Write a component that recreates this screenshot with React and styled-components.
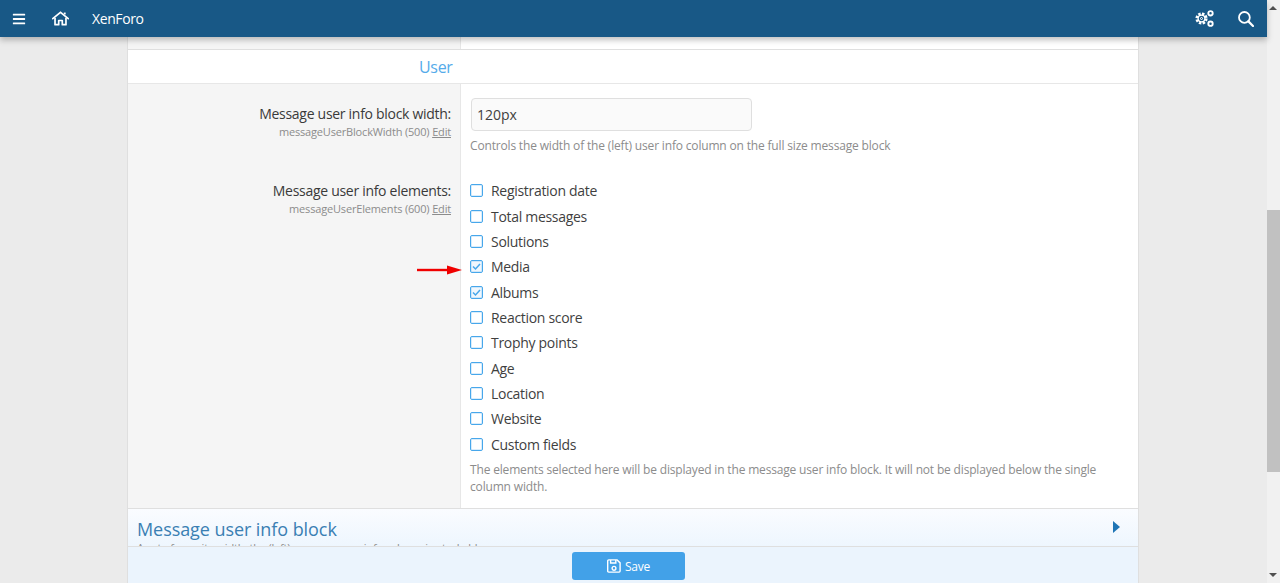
import styled, { createGlobalStyle } from "styled-components";
import { FaBars } from "react-icons/fa";

const GlobalStyle = createGlobalStyle`
  html, body {
    margin: 0;
    height: 100%;
    overflow: hidden;
  }
  body {
    font-family: "Open Sans", "Noto Sans", sans-serif;
    font-size: 14px;
    color: #3f3f3f;
    background: #ebebeb;
  }
`;

const Page = styled.div`
  display: flex;
  width: 1280px;
  height: 583px;
`;
const Main = styled.div`
  display: flex;
  flex-direction: column;
  width: 1267px;
  position: relative;
`;
const Topbar = styled.header`
  position: relative;
  z-index: 2;
  flex: none;
  display: flex;
  align-items: center;
  height: 37px;
  padding: 0 13px 0 12px;
  box-sizing: border-box;
  background: #185886;
  color: #fff;
  box-shadow: 0 3px 6px rgba(0, 0, 0, 0.25);
`;
const TopIcon = styled.span`
  display: flex;
  margin-right: ${(p) => p.$gap || 0}px;
`;
const Brand = styled.span`
  font-size: 14px;
  font-weight: 400;
  letter-spacing: -0.4px;
  margin-right: auto;
`;
const Content = styled.div`
  flex: 1;
  min-height: 0;
  overflow: hidden;
  padding: 0 128px 0 127px;
  width: 1012px;
`;
const Panel = styled.div`
  width: 1012px;
  background: #fff;
  border-left: 1px solid #dfdfdf;
  border-right: 1px solid #dfdfdf;
  box-sizing: border-box;
`;
const Row = styled.div`
  display: grid;
  grid-template-columns: 333px 1fr;
`;
const Stub = styled(Row)`
  height: 12px;
  border-bottom: 1px solid #dfdfdf;
`;
const Label = styled.div`
  background: #f5f5f5;
  border-right: 1px solid #e7e7e7;
  padding: 20px 9px 0 0;
  text-align: right;
  box-sizing: border-box;
`;
const StubLabel = styled(Label)`
  padding: 0;
`;
const LabelTitle = styled.div`
  font-size: 14px;
  line-height: 20px;
  letter-spacing: -0.29px;
  color: #3a3a3a;
`;
const LabelHint = styled.div`
  font-size: 11px;
  line-height: 15px;
  letter-spacing: -0.17px;
  color: #8c8c8c;
  a {
    color: #8c8c8c;
    text-decoration: underline;
  }
`;
const Heading = styled.h3`
  margin: 0;
  height: 32px;
  padding: 1px 0 0 291px;
  font-size: 16px;
  font-weight: 400;
  line-height: 32px;
  color: #55abea;
  letter-spacing: -0.3px;
  border-bottom: 1px solid #e7e7e7;
`;
const Field = styled.div`
  padding: ${(p) => p.$top}px 30px ${(p) => p.$bottom}px 9px;
`;
const TextBox = styled.input`
  display: block;
  width: 281px;
  height: 33px;
  margin-left: 1px;
  box-sizing: border-box;
  padding: 0 5px;
  border: 1px solid #dfdfdf;
  border-radius: 4px;
  background: #fafafa;
  font: inherit;
  font-size: 14px;
  color: #3f3f3f;
  outline: none;
`;
const Explain = styled.p`
  margin: ${(p) => p.$top}px 0 0;
  font-size: 12px;
  line-height: 17px;
  letter-spacing: -0.17px;
  color: #8c8c8c;
`;
const Options = styled.div`
  display: flex;
  flex-direction: column;
`;
const Option = styled.div`
  display: flex;
  align-items: center;
  gap: 8px;
  height: 25.36px;
  font-size: 14px;
  letter-spacing: -0.3px;
  color: #3f3f3f;
`;
const Box = styled.span`
  flex: none;
  display: flex;
  width: 11px;
  height: 11px;
  border: 1px solid #47a7eb;
  border-radius: 2px;
  box-shadow: inset 0 0 0 1px rgba(71, 167, 235, 0.2);
  background: ${(p) => (p.$checked ? "#f0f7fd" : "#fff")};
`;
const CheckArrow = styled.span`
  position: absolute;
  left: 417px;
  top: 264px;
  display: flex;
`;
const Collapsed = styled.div`
  position: relative;
  height: 38px;
  overflow: hidden;
  box-sizing: border-box;
  padding: 8px 9px 0;
  background: linear-gradient(#fafcff, #eef6fe);
  border-top: 1px solid #dfdfdf;
`;
const CollapsedTitle = styled.div`
  font-size: 18px;
  line-height: 24px;
  letter-spacing: -0.07px;
  color: #3a7fb3;
`;
const CollapsedHint = styled.div`
  font-size: 11px;
  line-height: 14px;
  letter-spacing: -0.2px;
  color: #8c8c8c;
`;
const Caret = styled.span`
  position: absolute;
  right: 18px;
  top: 12px;
  width: 0;
  height: 0;
  border-left: 7px solid #1f75b5;
  border-top: 6px solid transparent;
  border-bottom: 6px solid transparent;
`;
const SaveBar = styled.div`
  flex: none;
  height: 37px;
  box-sizing: border-box;
  width: 1012px;
  margin-left: 127px;
  display: flex;
  justify-content: center;
  align-items: flex-start;
  padding: 5px 9px 0 0;
  background: #ebf4fd;
  border: 1px solid #dfdfdf;
  border-width: 1px 1px 0;
`;
const SaveButton = styled.button`
  display: flex;
  align-items: center;
  justify-content: center;
  gap: 4px;
  width: 113px;
  height: 28px;
  padding: 0;
  border: 0;
  border-radius: 3px;
  background: #42a1e8;
  color: #fff;
  font: inherit;
  font-size: 12px;
  letter-spacing: -0.2px;
`;
const Scrollbar = styled.div`
  position: relative;
  flex: none;
  width: 13px;
  height: 583px;
  background: #f1f1f1;
`;
const Thumb = styled.div`
  position: absolute;
  left: 0;
  right: 0;
  top: 210px;
  height: 262px;
  background: #c1c1c1;
`;
const ArrowUp = styled.span`
  position: absolute;
  left: 2px;
  top: 6px;
  border-left: 4px solid transparent;
  border-right: 4px solid transparent;
  border-bottom: 4px solid #505050;
`;
const ArrowDown = styled.span`
  position: absolute;
  left: 2px;
  bottom: 6px;
  border-left: 4px solid transparent;
  border-right: 4px solid transparent;
  border-top: 4px solid #505050;
`;

const elements = [
  ["Registration date", false],
  ["Total messages", false],
  ["Solutions", false],
  ["Media", true],
  ["Albums", true],
  ["Reaction score", false],
  ["Trophy points", false],
  ["Age", false],
  ["Location", false],
  ["Website", false],
  ["Custom fields", false],
];

const HomeIcon = () => (
  <svg width="17" height="15" viewBox="0 0 18 15" fill="none" stroke="#fff" strokeWidth="1.8">
    <path d="M0.8 7.6 9 1l8.2 6.6" strokeLinecap="round" />
    <path d="M13.5 3.2V1.2" strokeWidth="2" />
    <path d="M3.2 6.6V14h3.9V9.6h3.8V14h3.9V6.6" strokeLinejoin="round" />
  </svg>
);

const CogsIcon = () => (
  <svg width="19" height="17" viewBox="0 0 19 17" fill="none" stroke="#fff">
    <circle cx="6.5" cy="8.5" r="4.6" strokeWidth="3" strokeDasharray="2.3 1.3" />
    <circle cx="6.5" cy="8.5" r="3.4" strokeWidth="1.3" />
    <circle cx="6.5" cy="8.5" r="1" strokeWidth="1" />
    <circle cx="15.5" cy="3.3" r="2.2" strokeWidth="1.9" />
    <circle cx="15.5" cy="13.7" r="2.2" strokeWidth="1.9" />
  </svg>
);

const SearchIcon = () => (
  <svg width="16" height="16" viewBox="0 0 16 16" fill="none" stroke="#fff" strokeWidth="1.8">
    <circle cx="6.4" cy="6.4" r="5.4" />
    <path d="M10.4 10.4 15 15" strokeWidth="2.2" strokeLinecap="round" />
  </svg>
);

const FloppyIcon = () => (
  <svg width="14" height="14" viewBox="0 0 14 14" fill="none" stroke="#fff" strokeWidth="1.4">
    <path d="M1.7.9h8.4l3 3v8.2a1 1 0 0 1-1 1H1.7a1 1 0 0 1-1-1V1.9a1 1 0 0 1 1-1z" />
    <path d="M3.6 1v3h5.2V1" />
    <circle cx="7" cy="9.3" r="1.9" />
  </svg>
);

const App = () => (
  <>
    <GlobalStyle />
    <Page>
      <Main>
        <Topbar>
          <TopIcon $gap={26}>
            <FaBars size={14} />
          </TopIcon>
          <TopIcon $gap={23}>
            <HomeIcon />
          </TopIcon>
          <Brand>XenForo</Brand>
          <TopIcon $gap={24}>
            <CogsIcon />
          </TopIcon>
          <TopIcon>
            <SearchIcon />
          </TopIcon>
        </Topbar>
        <Content>
          <Panel>
            <Stub>
              <StubLabel />
              <div />
            </Stub>
            <Heading>User</Heading>
            <Row>
              <Label>
                <LabelTitle>Message user info block width:</LabelTitle>
                <LabelHint>
                  messageUserBlockWidth (500) <a>Edit</a>
                </LabelHint>
              </Label>
              <Field $top={14} $bottom={7}>
                <TextBox defaultValue="120px" />
                <Explain $top={6}>Controls the width of the (left) user info column on the full size message block</Explain>
              </Field>
            </Row>
            <Row>
              <Label>
                <LabelTitle>Message user info elements:</LabelTitle>
                <LabelHint>
                  messageUserElements (600) <a>Edit</a>
                </LabelHint>
              </Label>
              <Field $top={17} $bottom={13}>
                <Options>
                  {elements.map(([name, checked]) => (
                    <Option key={name}>
                      <Box $checked={checked}>
                        {checked && (
                          <svg width="11" height="11" viewBox="0 0 11 11" fill="none" stroke="#47a7eb" strokeWidth="1.5">
                            <path d="M2 5.5 4.5 8 9 3" />
                          </svg>
                        )}
                      </Box>
                      {name}
                    </Option>
                  ))}
                </Options>
                <Explain $top={4}>
                  The elements selected here will be displayed in the message user info block. It will not be displayed
                  below the single column width.
                </Explain>
              </Field>
            </Row>
            <Collapsed>
              <CollapsedTitle>Message user info block</CollapsedTitle>
              <CollapsedHint>A set of per-site width, the (left) message user info column in stackable</CollapsedHint>
              <Caret />
            </Collapsed>
          </Panel>
        </Content>
        <SaveBar>
          <SaveButton>
            <FloppyIcon />
            Save
          </SaveButton>
        </SaveBar>
        <CheckArrow>
          <svg width="45" height="12" viewBox="0 0 45 12">
            <path d="M0 4.8h32v2.4H0z" fill="#f00000" />
            <path d="M30 1.5 45 6 30 10.5z" fill="#f00000" />
          </svg>
        </CheckArrow>
      </Main>
      <Scrollbar>
        <ArrowUp />
        <Thumb />
        <ArrowDown />
      </Scrollbar>
    </Page>
  </>
);

export default App;
